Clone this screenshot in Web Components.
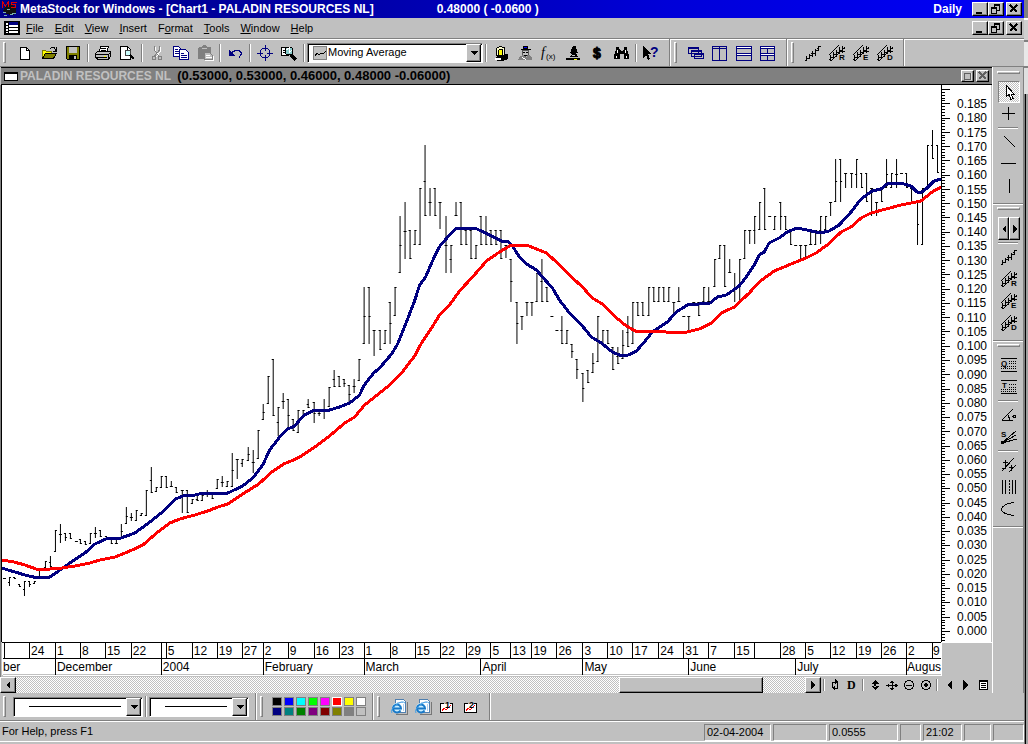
<!DOCTYPE html>
<html lang="en">
<head>
<meta charset="utf-8">
<title>MetaStock for Windows</title>
<style>
  html, body { margin: 0; height: 100%; }
  body { background: #c0c0c0; font: 11px/13px "Liberation Sans", Arial, sans-serif; color: #000; }
</style>
</head>
<body>
<metastock-app></metastock-app>

<script>
const BASE = `*{box-sizing:border-box}button,select{font:inherit;color:inherit;margin:0;padding:0;border:0;background:none;border-radius:0}svg{display:block}`;
const DITHER = 'repeating-conic-gradient(#c0c0c0 0 25%,#fff 0 50%) 0 0/2px 2px';
const RAISED = 'border:1px solid;border-color:#fff #000 #000 #fff;box-shadow:inset -1px -1px #808080';
function define(name, css, html, setup) {
  customElements.define(name, class extends HTMLElement {
    constructor() {
      super();
      this.attachShadow({ mode: 'open' }).innerHTML = `<style>${BASE}${css}</style>${typeof html === 'function' ? '' : html}`;
    }
    connectedCallback() {
      if (this.ready) return;
      this.ready = true;
      if (typeof html === 'function') this.shadowRoot.innerHTML += html(this);
      if (setup) setup(this);
    }
  });
}

/* ---------- icons, all on a 16 x 16 grid ---------- */
const K = 'fill="none" stroke="#000"';
const N = 'fill="none" stroke="#000080"';
const trend = `<path ${K} d="M0 15.500h2M1.500 15v-4M2 13.500h2M4.500 14V9M5 10.500h2M7.500 12V6M6 8.500h1M8 8.500h2M10.500 11V4M11 5.500h2M13.500 6V1M12 3.500h1M14 1.500h2"/>`;
const channel = l => `<path ${K} d="M0 14.500h1M1.500 16v-6M2 12.500h2M4.500 14V7M5 9.500h2M7.500 12V5M8 7.500h2M10.500 10V2M11 5.500h2M13.500 8V1M14 3.500h2M12 6.500h4"/><path ${K} d="M0 10L10 0M2 16L16 2"/><path fill="#c0c0c0" d="M10 9h6v7h-6z"/><text x="10" y="15" font-size="8" font-weight="bold">${l}</text>`;
const ie = `<path fill="#fff" stroke="#5080b0" d="M4.500.5h8l2 2v11h-10z"/><path fill="none" stroke="#b0d0f0" d="M6 3h6M12 5v7"/><path d="M5 15.500h11V3" fill="none" stroke="#777"/><g shape-rendering="auto"><circle cx="6" cy="9" r="5" fill="#cdf0ff"/><path d="M2 9.500h8A4 4 0 1 0 9.500 11.500" fill="none" stroke="#1878c8" stroke-width="2"/><path d="M1 14Q-1 11 5 6t9-2" fill="none" stroke="#40a0e8"/></g>`;
const layoutIcon = n => `<path fill="#fff" stroke="#000" d="M5 4.500H1.500v9h12v-9H11"/><path d="M3 12l2-3 2 2 3-3 2-2" fill="none" stroke="red"/><text x="6" y="9" font-size="9" font-weight="bold">${n}</text>`;
const ICONS = {
  logo: `<path d="M1 10l3-5 5-2 5 4v6l-4 1-6-1z" fill="#111"/><path d="M1 11h3M5 8h3M10 12h4M12 6h2M2 14h3M8 13h3" stroke="#7ab0b0" fill="none"/><path d="M0.500 7V1l3 4 3-4v5M14.500 1.500h-5v2h4v3h-5" fill="none" stroke="#e00000"/>`,
  doc: `<path fill="#fff" stroke="#000" stroke-width="2" d="M1 2h14v12H1z"/><path fill="#000080" d="M5 2h9v3H5z"/><path fill="none" stroke="#000" d="M4.500 2v12M5 7.500h9M5 10.500h9M1 5.500h3M1 8.500h3M1 11.500h3"/>`,
  'new': `<path fill="#fff" stroke="#000" d="M3.500 2.500h6l3 3v9h-9z"/><path ${K} d="M9.500 2v3.500H13"/>`,
  open: `<path fill="#ff0" stroke="#808000" d="M1.500 13V5.500h3l1 1h5V9"/><path fill="#808000" stroke="#000" d="M1.500 13.500l3-5h11l-3 5z"/><path ${K} d="M9 3.500l2-1h2l2 3M15.500 2v4H12"/>`,
  save: `<path fill="#808000" stroke="#000" d="M1.500 1.500h13v13h-12l-1-1z"/><path fill="#c0c0c0" d="M4 2h8v6H4z"/><path fill="#000" d="M4 10h8v5H4z"/><path fill="#c0c0c0" d="M9 11h2v3H9z"/>`,
  print: `<path fill="#fff" stroke="#000" d="M4.500 6l1-4.500h8L12 6z"/><path ${K} d="M6 3.500h5M6 5.500h5"/><path fill="#c0c0c0" stroke="#000" d="M.5 8.500l2-2h13v5l-2 3H3l-2.500-2z"/><path ${K} d="M1 9.500h12M1 12.500h11M13.500 9v5M15 8l-2 2"/><path stroke="#ff0" d="M9 11h2"/>`,
  preview: `<path fill="#fff" stroke="#000" d="M1.500 1.500h7l3 3v10h-10z"/><path ${K} d="M8.500 2v3h3"/><circle cx="9" cy="8" r="3" fill="#cff" stroke="#444"/><path d="M11 10l4 4" stroke="#000" stroke-width="2"/>`,
  cut: `<path fill="none" stroke="#fff" d="M6.500 2v4l4 6M11.500 2v4l-4 6"/><path fill="none" stroke="#808080" d="M5.500 1v4l4 6M10.500 1v4l-5 6"/><path fill="none" stroke="#808080" d="M3.500 11.500h3v3h-3zM9.500 11.500h3v3h-3z"/>`,
  copy: `<path fill="#fff" stroke="#000080" d="M.5 1.500h5l3 3v7h-8z"/><path ${N} d="M2 4.500h3M2 6.500h4M2 8.500h4"/><path fill="#fff" stroke="#000080" d="M6.500 4.500h6l3 3v7h-9z"/><path ${N} d="M8 8.500h3M8 10.500h6M8 12.500h6"/>`,
  paste: `<path fill="#808080" d="M1 3l1-1h3l1-2h3l1 2h3l1 1v11H1z"/><path d="M5 3h5" stroke="#c0c0c0"/><path fill="#c0c0c0" stroke="#808080" d="M7.500 7.500h5l3 3v4h-8z"/><path fill="none" stroke="#fff" d="M9 10.500h4M9 12.500h6M8 15.500h8V11"/>`,
  undo: `<path ${N} d="M2.500 5v5h5M3 9.500l3-3 3-1h3l2 2v2l-2 3"/><path fill="#000080" d="M2 5l6 6H2z"/>`,
  target: `<circle cx="8" cy="8" r="5" ${N}/><path ${N} d="M8 0v6M8 10v6M0 8h6M10 8h6"/>`,
  find: `<path fill="#fff" stroke="#000" d="M.5 2.500h7v8h-7z"/><path fill="none" stroke="#000" d="M2 5h3M2 7h3"/><circle cx="8" cy="6" r="4" fill="#8cc" stroke="#000"/><path d="M5 5l3-2v5l3-3" stroke="#fff" fill="none"/><path d="M10 10l5 5" stroke="#000" stroke-width="3"/>`,
  chart: `<path fill="#c0c0c0" stroke="#808080" d="M1.500 1.500h13v13h-13z"/><path ${K} d="M3 11l2-3 2 2 2-2 2 1 3-3"/>`,
  expert: `<path d="M2 13l3-3 10-1v5l-5 2H4z" fill="#000"/><path fill="#ffc" stroke="#000" d="M3.500 3.500l3-2 5 1v8h-8z"/><path fill="#ff0" stroke="#000" d="M5 11l1-6 3-1 1 6z"/><path d="M2 14h6" stroke="#fff" stroke-width="2"/>`,
  man: `<path fill="#000" d="M4 4h10v1H4zM6 1h5v3H6z"/><path d="M7 2h3" stroke="#00f"/><path fill="#c0c0c0" stroke="#555" d="M5.500 5.500h6v4l-3 2-3-2z"/><path stroke="#000" d="M6 7h2M9 7h2M7 10h3"/><path fill="#808080" d="M1 15l2-4 3-1 3 2 3-2 3 3v2z"/><path stroke="#fff" d="M5 12l4 3" stroke-dasharray="1"/>`,
  fx: `<text x="0" y="12" font-size="14" font-style="italic" font-family="Liberation Serif, serif">f</text><text x="5" y="14" font-size="8">(x)</text>`,
  micro: `<path fill="#000" d="M8 1h3v2l2 5h-2l2 4h-8l2-3-2-1zM1 13h14v2H1z"/><path stroke="#ff0" d="M9 14h3"/><path stroke="#c0c0c0" d="M7 10h3"/>`,
  dollar: `<text x="4" y="13" font-size="14" font-weight="bold" stroke="#000">$</text>`,
  bino: `<path fill="#000" d="M3 2h3v2l2 2h1l2-2V2h3v3l2 5v4h-5V9H7v5H1v-4l2-5z"/><path d="M4 5v3M12 5v3M3 11v2M13 11v2" stroke="#fff"/>`,
  help: `<path fill="#000" d="M0 1v12l3-3 2 5 2-1-2-5h4z"/><text x="7" y="12" font-size="14" font-weight="bold" fill="#000080">?</text>`,
  cascade: `<path fill="#c0c0c0" stroke="#000080" d="M.5 2.500h10v6H.5zM3.500 5.500h10v6h-10zM6.500 8.500h9v5h-9z"/><path ${N} d="M0 3.500h11M3 6.500h11M6 9.500h10"/>`,
  tileV: `<path ${N} d="M.5 1.500h14v14H.5zM7.500 2v13M1 3.500h13"/>`,
  tileH: `<path ${N} d="M.5 1.500h15v14H.5zM1 3.500h14M1 8.500h14M1 10.500h14"/><path stroke="#fff" d="M1 2.500h14M1 9.500h14"/>`,
  tileG: `<path ${N} d="M.5 1.500h14v14H.5zM7.500 2v13M1 3.500h13M1 8.500h13M1 10.500h13"/><path stroke="#fff" d="M1 2.500h13M1 9.500h13"/>`,
  trend, chR: channel('R'), chE: channel('E'), chD: channel('D'),
  cursor: `<path fill="#fff" stroke="#000" d="M5.500 1.500v11l2.500-2 2 5 2-1-2-4.500h3z"/>`,
  cross: `<path ${K} d="M7.500 1v13M1 7.500h13"/>`,
  diag: `<path ${K} d="M3 2l11 11"/>`, hor: `<path ${K} d="M0 7.500h15"/>`, ver: `<path ${K} d="M8.500 1v14"/>`,
  quad: `<path ${K} d="M0 1.500h16M0 14.500h16"/><path ${K} stroke-dasharray="1" d="M8 4.500h8M8 6.500h8M0 9.500h16M0 11.500h16"/><text x="0" y="9" font-size="8" font-weight="bold">Q</text>`,
  tir: `<path ${K} d="M0 1.500h16M0 14.500h16"/><path ${K} stroke-dasharray="1" d="M8 5.500h8M8 8.500h8M0 10.500h16M0 12.500h16"/><text x="1" y="9" font-size="8" font-weight="bold">T</text>`,
  angle: `<path ${K} d="M1 13.500h11M1 13L12 2M7 8l2 5"/><circle cx="13.500" cy="9.500" r="1.500" ${K}/>`,
  fan: `<path ${K} d="M1 14L15 2M1 14L15 6M1 14L16 10"/><path fill="#000" d="M0 12h5l-3 3H0z"/><text x="0" y="8" font-size="8" font-weight="bold">S</text>`,
  fork: `<path ${K} d="M1 14L13 1M8 15l7-7M2 5.500h5M4.500 3v6M8 10.500h5M10.500 8v6M1 11.500h4"/>`,
  lines: `<path ${K} d="M1.500 1v14M4.500 1v14M11.500 1v14M14.500 1v14"/><path ${K} stroke-dasharray="2 1" d="M8.500 1v14"/>`,
  arc: `<path ${K} d="M13 1.500C6 2 1 5 .5 8s5 6 12.500 6.500"/>`,
  left: `<path d="M10 4v8L6 8z"/>`, right: `<path d="M6 4v8l4-4z"/>`,
  leftBig: `<path d="M11 3v10L6 8z"/>`, rightBig: `<path d="M5 3v10l5-5z"/>`,
  down: `<path d="M4 6h8l-4 4z"/>`,
  min: `<path d="M4 11h6v2H4z"/>`,
  restore: `<path d="M6 3h6v2H6zM3 6h6v2H3z"/><path ${K} d="M6.500 5v1M11.500 4v5H9M3.500 7v5.500h5V7"/>`,
  max: `<path fill="#fff" d="M5 5h7v8H5z"/><path fill="#c0c0c0" stroke="#000" d="M4.500 5.500h6v6h-6z"/>`,
  close: `<path d="M4 4l7 7M11 4l-7 7" stroke="#000" stroke-width="2"/>`,
  refresh: `<path ${K} d="M5.500 11V5h3M10.500 5v6h-3"/><path d="M8 2l3 3-3 2zM8 14l-3-3 3-2z"/>`,
  day: `<text x="3" y="12" font-size="12" font-weight="bold" font-family="Liberation Serif, serif">D</text>`,
  ud: `<path d="M8 3l4 4H4zM8 13l4-4H4zM7 6h2v4H7z"/>`,
  move: `<path ${K} d="M8 4v9M3 8.500h10"/><path d="M8 3l2 3H6zM8 14l2-3H6zM2 8.500l3-2v4zM14 8.500l-3-2v4z"/>`,
  minus: `<circle cx="8" cy="8" r="4.500" ${K}/><path ${K} d="M5 8.500h6"/>`,
  plus: `<circle cx="8" cy="8" r="4.500" ${K}/><path stroke="#000" stroke-width="2" d="M6 8h4M8 6v4"/>`,
  sheet: `<path fill="#fff" stroke="#000" d="M4.500 3.500h8v9h-8z"/><path ${K} d="M4 4.500h8M6 6.500h5M6 8.500h5M6 10.500h5"/>`,
  ie, lay1: layoutIcon(1), lay2: layoutIcon(2)
};

define('ms-icon', `:host{display:block;width:16px;height:16px;flex:none}svg{overflow:visible;font-family:"Liberation Sans",sans-serif}`,
  el => `<svg width="16" height="16" viewBox="0 0 16 16" shape-rendering="crispEdges" aria-hidden="true">${ICONS[el.getAttribute('name')] || ''}</svg>`);

define('tool-button', `:host{display:block;width:24px;height:22px;flex:none}
  :host([mini]){width:17px;height:16px}
  button{width:100%;height:100%;display:flex;align-items:center;justify-content:center}
  :host([down]) button{border:1px solid;border-color:#808080 #fff #fff #808080;background:${DITHER}}`,
  el => `<button type="button" aria-label="${el.getAttribute('label')}"><ms-icon name="${el.getAttribute('icon')}"></ms-icon></button>`);

define('cap-button', `:host{display:block;width:16px;height:14px;flex:none}
  :host([small]){width:13px;height:12px}
  button{width:100%;height:100%;background:#c0c0c0;${RAISED};display:flex;align-items:center;justify-content:center;overflow:hidden}
  :host([small]) ms-icon{opacity:.5}`,
  el => `<button type="button" aria-label="${el.getAttribute('label')}"><ms-icon name="${el.getAttribute('icon')}"></ms-icon></button>`);

define('bar-grip', `:host{display:block;width:3px;height:21px;flex:none;margin:0 7px 0 3px;border:1px solid;border-color:#fff #808080 #808080 #fff}
  :host([flat]){width:23px;height:3px;margin:2px 0 7px 4px}`, '');
define('bar-sep', `:host{display:block;width:2px;height:18px;margin:0 2px;flex:none;border-left:1px solid #808080;border-right:1px solid #fff}
  :host([flat]){width:20px;height:2px;margin:2px 5px;border:0;border-top:1px solid #808080;border-bottom:1px solid #fff}
  :host([end]){height:auto;align-self:stretch;margin:0}
  :host([end][flat]){width:auto;height:2px;margin:6px 0 0}
  :host([mini]){height:12px;margin:0 2px}`, '');

/* ---------- title and menu ---------- */
define('title-bar', `:host{display:flex;align-items:center;height:18px;padding:0 2px;color:#fff;font-weight:bold;font-size:12px;line-height:16px;background:linear-gradient(90deg,#000088,#0000a8 35%,#0000d8 65%,#0000f8);white-space:nowrap}
  .t{margin-left:2px}.p{margin-left:63px}.d{margin-left:auto;margin-right:10px}cap-button:last-child{margin-left:2px}`,
  `<ms-icon name="logo"></ms-icon><span class="t"><slot></slot></span><span class="p"><slot name="price"></slot></span><span class="d"><slot name="period"></slot></span>
  <cap-button icon="min" label="Minimize"></cap-button><cap-button icon="restore" label="Restore"></cap-button><cap-button icon="close" label="Close"></cap-button>`);

define('menu-bar', `:host{display:flex;align-items:center;height:20px;padding:0 2px 0 4px}
  nav{display:flex;flex:1;gap:1px;padding-left:1px}nav button{padding:0 5px}cap-button:last-child{margin-left:2px}`,
  `<ms-icon name="doc"></ms-icon><nav>${['File','Edit','View','Insert','F|ormat','Tools','Window','Help'].map(m => {
    const s = m === 'F|ormat' ? 'F<u>o</u>rmat' : `<u>${m[0]}</u>${m.slice(1)}`; return `<button type="button">${s}</button>`; }).join('')}</nav>
  <cap-button icon="min" label="Minimize chart"></cap-button><cap-button icon="restore" label="Restore chart"></cap-button><cap-button icon="close" label="Close chart"></cap-button>`);

/* ---------- drop-down ---------- */
define('drop-list', `:host{display:block;flex:none;height:20px}
  div{display:flex;align-items:center;height:100%;background:#fff;border:1px solid;border-color:#808080 #fff #fff #808080;box-shadow:inset 1px 1px #000;padding:1px 1px 1px 4px;position:relative}
  select{appearance:none;flex:1;min-width:0;height:100%;outline:0}
  .line{background:linear-gradient(#000,#000) no-repeat 11px 50%/calc(100% - 31px) 1px}
  span{width:15px;height:100%;background:#c0c0c0;${RAISED};display:flex;align-items:center;justify-content:center;overflow:hidden;position:absolute;right:1px;top:0;pointer-events:none}`,
  el => { const t = el.getAttribute('text'); return `<div>${t ? '<ms-icon name="chart"></ms-icon>' : ''}<select aria-label="${el.getAttribute('label')}"${t ? '' : ' class="line"'}><option${t ? '' : ' label=" "'}>${t || ''}</option></select><span><ms-icon name="down"></ms-icon></span></div>`; });

/* ---------- toolbars ---------- */
const tb = list => list.split(' ').map(n => n === '|' ? '<bar-sep></bar-sep>' : `<tool-button icon="${n}" label="${n}"></tool-button>`).join('');
define('main-toolbar', `:host{display:flex;align-items:center;height:29px;border-top:1px solid #808080;border-bottom:1px solid #808080;box-shadow:inset 0 1px #fff}
  drop-list{width:176px}bar-sep[end]{margin-left:6px}`,
  `<bar-grip></bar-grip>${tb('new open save | print preview | cut copy paste | undo | target find |')}
   <drop-list text="Moving Average" label="Indicator"></drop-list>${tb('| expert man fx micro dollar bino | help')}
   <bar-sep end></bar-sep><bar-grip></bar-grip>${tb('cascade tileV tileH tileG')}<bar-sep end></bar-sep><bar-grip></bar-grip>${tb('trend chR chE chD')}<bar-sep end></bar-sep>`);

const vb = list => list.split(' ').map(n => n === '|' ? '<bar-sep flat></bar-sep>' : `<tool-button icon="${n}" label="${n}"${n === 'cursor' ? ' down' : ''}></tool-button>`).join('');
define('side-toolbar', `:host{display:block;width:32px;border-left:1px solid #fff;border-right:1px solid #808080;padding-top:2px}
  tool-button{width:22px;margin-left:5px}
  .spin{display:flex;width:22px;height:23px;margin-left:5px}
  .spin cap-button{width:11px;height:23px}`,
  `<bar-grip flat></bar-grip>${vb('cursor cross | diag hor ver')}<bar-sep flat end></bar-sep>
   <bar-grip flat></bar-grip><div class="spin"><cap-button icon="left" label="Back"></cap-button><cap-button icon="right" label="Forward"></cap-button></div><bar-sep flat></bar-sep>${vb('trend chR chE chD')}<bar-sep flat end></bar-sep>
   <bar-grip flat></bar-grip>${vb('quad tir | angle fan | fork lines arc')}<bar-sep flat end></bar-sep>`);

define('color-palette', `:host{display:grid;grid-template-columns:repeat(8,10px);grid-auto-rows:9px;gap:1px 2px;margin:0 0 0 2px}
  label{display:block;border:1px solid #808080;background-clip:padding-box}input{appearance:none;display:block;width:100%;height:100%;margin:0}
  label:has(:checked){border-color:#fff}`,
  ['#000','#00f','#0ff','#0f0','#f0f','#f00','#ff0','#fff','#000080','#008080','#008000','#800080','#800000','#808000','#808080','#c0c0c0']
    .map(c => `<label style="background-color:${c}"><input type="radio" name="ink" aria-label="${c}"${c === '#f00' ? ' checked' : ''}></label>`).join(''));

define('line-toolbar', `:host{display:flex;align-items:center;height:28px;border-bottom:1px solid #808080}
  .a{width:130px}.b{width:100px}bar-sep{height:21px}bar-sep[end]{height:auto;margin-left:6px}`,
  `<bar-grip></bar-grip><drop-list class="a" label="Line style"></drop-list><bar-sep></bar-sep><drop-list class="b" label="Line weight"></drop-list>
   <bar-sep end></bar-sep><bar-grip></bar-grip><color-palette></color-palette><bar-sep end></bar-sep><bar-grip></bar-grip>${tb('ie ie lay1 lay2')}<bar-sep end></bar-sep>`);

define('status-bar', `:host{display:flex;align-items:flex-start;gap:2px;height:23px;padding:2px 0 0 2px;border-top:1px solid #fff;box-shadow:inset 0 -2px #c0c0c0,inset 0 -3px #fff;line-height:14px}
  .m{flex:1}p{margin:0;height:17px;padding:0 2px;border:1px solid;border-color:#808080 #fff #fff #808080;white-space:nowrap}`,
  `<span class="m">For Help, press F1</span>${[[67,'02-04-2004'],[54,''],[69,'0.0555'],[21,''],[39,'21:02'],[27,''],[31,'']].map(([w,t]) => `<p style="width:${w}px">${t}</p>`).join('')}`);

/* ---------- chart ---------- */
/* each bar: x, high, low, then where the open and close ticks sit (t top, m middle, b bottom) */
const BARS = `4 578 578 tt,9 577 586 mt,14 577 579 tb,19 584 587 tb,24 581 596 mt,29 581 587 tm,34 581 584 bt,39 568 578 bt,45 561 568 bt,50 556 567 mb,55 530 552 bt,60 524 543 mm,65 533 541 tm,70 533 539 tb,76 541 541 tt,80 539 544 tb,85 541 545 tb,90 533 544 bt,95 527 538 mm,100 530 537 tb,106 536 539 tb,111 539 544 tb,116 539 544 bb,121 524 538 bm,126 507 524 bm,131 513 521 mm,136 510 521 bt,141 513 516 bt,146 490 516 bt,151 467 493 mb,156 487 492 bt,161 476 488 bt,166 476 488 tb,171 481 487 bb,176 487 493 tb,182 490 513 tt,187 490 513 tb,192 499 504 bt,197 496 501 mb,202 495 501 bt,207 490 497 mm,212 494 499 tb,217 479 489 bt,222 476 487 mm,227 481 487 bt,232 453 487 bm,237 459 479 tt,242 459 467 mt,248 447 461 bm,253 450 473 mm,258 430 459 bt,263 404 420 bm,268 376 404 bt,273 359 416 tb,278 407 436 mt,283 393 409 mm,288 399 430 tm,293 419 431 tb,298 410 433 bt,303 410 418 bt,308 399 408 mb,314 402 423 tm,319 409 416 mm,324 399 419 mm,329 387 407 bt,334 370 387 mb,339 376 387 tb,344 379 387 tm,349 385 402 tm,354 379 393 mm,359 359 381 bt,364 287 344 bm,369 287 344 tm,374 330 356 tt,380 330 350 tb,385 330 344 bt,390 302 344 tm,395 287 316 bt,400 216 273 bm,405 202 259 mm,410 230 259 tb,415 230 245 bt,420 188 245 bt,425 145 216 mb,430 188 216 mm,435 188 216 tb,440 202 229 tt,446 216 273 mm,451 245 273 mt,456 202 216 bb,461 202 245 tb,466 230 245 tb,471 230 259 tb,476 245 259 bt,481 216 245 tb,486 216 245 mb,491 230 245 tb,496 230 245 tb,501 230 259 tb,506 245 258 tt,511 259 302 tm,517 302 344 tm,522 316 330 tt,527 302 316 tt,532 302 316 tt,537 273 302 bt,542 259 302 mb,547 287 302 tb,552 316 316 tt,557 330 330 tt,562 316 344 mb,567 330 344 bt,572 344 358 tm,577 359 379 tm,583 373 402 tm,588 370 383 tb,593 353 373 bm,598 316 362 bt,603 330 344 bt,608 330 344 tb,613 347 370 tb,618 347 364 mb,623 330 359 bm,628 316 347 mb,633 302 344 bt,638 302 316 tb,643 302 316 tb,649 287 316 bt,654 287 302 tb,659 287 302 bt,664 287 302 tb,669 287 302 bt,674 302 313 tt,679 287 302 bb,684 316 316 tt,689 316 331 tt,694 302 302 tt,699 302 316 tb,704 287 302 bt,709 287 302 bb,715 259 287 bt,720 245 259 bt,725 245 287 tb,730 259 273 bb,735 273 302 mm,740 259 302 bt,745 230 259 bt,750 230 244 tt,755 216 244 mt,760 202 230 bt,765 188 230 tb,770 216 216 tt,775 216 230 bt,781 202 230 tm,786 216 230 tb,791 230 245 tb,796 245 245 tt,801 245 259 tt,806 245 258 tt,811 230 245 bb,816 230 245 bt,821 216 244 mt,826 216 230 bt,831 202 216 tt,836 159 202 bm,841 159 202 tm,846 173 188 tt,852 173 188 tt,857 159 188 mt,862 173 188 tb,867 173 202 tb,872 188 216 tt,877 202 216 tt,882 188 202 tb,887 159 188 bm,892 173 188 bt,897 159 188 mm,902 173 173 tt,907 173 188 tb,912 188 202 tb,918 202 245 tm,923 188 245 bt,928 145 188 bt,933 130 159 mb,938 145 173 tb`;
const FAST = '2,568 8,570 15,572 25,575 38,578 50,577 60,570 70,563 85,553 95,544 106,539 121,538 135,533 150,522 165,510 176,499 183,496 195,495 204,493 215,494 228,493 243,486 254,477 263,465 270,450 280,437 288,429 295,426 300,420 305,415 313,411 320,410 330,410 340,407 350,403 360,395 364,386 374,373 380,368 392,354 398,344 408,319 415,301 420,285 426,277 436,254 441,245 452,233 457,228 475,228 482,231 494,237 502,241 508,241 513,246 520,257 527,264 537,270 543,277 553,288 560,300 570,313 583,326 592,337 602,343 613,352 620,355 629,355 637,351 645,342 653,332 668,322 677,312 688,305 700,304 711,303 718,297 727,295 740,286 747,277 755,265 760,255 765,252 770,243 780,238 788,232 798,228 808,230 821,233 830,231 840,225 852,212 862,199 873,191 882,189 888,184 897,183 905,184 912,186 918,192 923,192 928,188 935,181 942,179';
const SLOW = '2,560 14,562 25,565 36,569 50,569 62,568 75,566 90,563 100,560 115,557 130,551 143,545 158,532 170,523 180,519 195,515 208,511 218,507 228,504 243,494 259,484 272,472 284,464 294,460 300,457 318,445 330,436 338,429 345,423 355,417 365,405 380,393 390,385 402,373 415,356 422,343 432,328 440,315 450,305 460,291 473,277 487,261 500,252 512,245 527,245 547,253 557,262 570,275 583,287 593,298 603,304 615,316 627,326 638,332 657,331 667,332 688,332 700,329 712,323 722,313 735,307 750,293 760,282 775,271 792,264 807,258 817,253 828,245 842,232 852,227 862,218 872,213 887,209 902,205 922,201 933,192 942,187';

define('price-plot', `:host{display:block;min-width:0;min-height:0;background:#fff;position:relative;overflow:hidden}svg{position:absolute;inset:0;width:100%;height:100%}`,
  () => {
    const d = BARS.split(',').map(r => {
      const [x, h, l, oc] = r.trim().split(' ');
      const X = +x, H = +h, L = Math.max(+l, H + 1);
      const y = c => (c === 't' ? H : c === 'b' ? L - 1 : Math.round((H + L) / 2)) + .5;
      return `${H === +l ? '' : `M${X + .5} ${H}V${L}`}M${X - 1} ${y(oc[0])}h2M${X} ${y(oc[1])}h2`;
    }).join('');
    return `<svg viewBox="2 85 940 557" preserveAspectRatio="none" shape-rendering="crispEdges" role="img" aria-label="Daily prices with two moving averages"><path d="${d}" fill="none" stroke="#000"/><g fill="none" stroke-width="3" stroke-linejoin="round"><polyline points="${FAST}" stroke="#000080"/><polyline points="${SLOW}" stroke="#f00"/></g></svg>`;
  });

define('price-scale', `:host{display:flex;flex-direction:column;background:#fff;padding:12px 3px 4px 16px;font-size:12px;line-height:14px;position:relative;border-right:1px solid #c0c0c0;min-height:0;text-align:left}
  span{flex:1 1 0;min-height:0;display:flex;align-items:center}svg{position:absolute;left:0;top:0;width:12px;height:100%}`,
  () => {
    let d = 'M.5 0V557';
    const step = 542 / 38 / 5;
    for (let i = -3; i < 191; i++) { const y = Math.round(546 - i * step); if (y > 0 && y < 557) d += `M0 ${y + .5}H${i % 5 === 0 ? 9 : 4}`; }
    let s = '';
    for (let i = 37; i >= 0; i--) s += `<span>${(i * .005).toFixed(3)}</span>`;
    return `<svg viewBox="0 0 12 557" preserveAspectRatio="none" shape-rendering="crispEdges" aria-hidden="true"><path d="${d}" fill="none" stroke="#000"/></svg>${s}`;
  });

define('date-scale', `:host{display:block;background:#fff;font-size:12px;line-height:16px;border-bottom:1px solid #c0c0c0;min-width:0}
  div{display:grid;border-top:1px solid #000;height:16px}
  span{min-width:0;border-left:1px solid #000;padding-left:1px;white-space:nowrap}
  span:first-child{border-left-color:#fff}
  .d span:first-child,.d span:last-child{padding:0}`,
  () => {
    const row = (a, end, c) => { const w = a.map(([x], i) => (a[i + 1] ? a[i + 1][0] : end) - x); return `<div class="${c}" style="grid-template-columns:${w.map(v => `minmax(0,${v}fr)`).join(' ')}">${a.map(([, t]) => `<span>${t}</span>`).join('')}</div>`; };
    return row([[2,''],[4,''],[29,24],[55,1],[80,8],[105,15],[131,22],[161,''],[166,5],[192,12],[217,19],[242,27],[263,2],[288,9],[314,16],[339,23],[364,1],[390,8],[415,15],[440,22],[466,29],[491,5],[511,13],[532,19],[557,26],[583,3],[608,10],[633,17],[659,24],[684,31],[709,7],[735,15],[755,''],[781,28],[806,5],[831,12],[857,19],[882,26],[907,2],[933,9]], 942, 'd')
      + row([[2,'ber'],[55,'December'],[161,'2004'],[263,'February'],[364,'March'],[481,'April'],[583,'May'],[689,'June'],[796,'July'],[907,'Augus']], 942, 'd');
  });

define('time-scroller', `:host{display:flex;align-items:center;height:16px}
  .sb{flex:1;display:grid;grid-template-columns:16px 603fr 144fr 42fr 16px;height:16px;background:${DITHER}}
  cap-button{width:16px;height:16px}.th{background:#c0c0c0;${RAISED};grid-column:3}.r{grid-column:5}
  .tools{display:flex;align-items:center;width:171px}.tools bar-sep:first-child{margin-right:1px}`,
  `<div class="sb"><cap-button icon="left" label="Scroll left"></cap-button><button class="th" type="button" aria-label="Scroll position"></button><cap-button class="r" icon="right" label="Scroll right"></cap-button></div>
   <div class="tools"><bar-sep mini></bar-sep>${['refresh','day','|','ud','move','minus','plus','|','leftBig','rightBig','sheet'].map(n => n === '|' ? '<bar-sep mini></bar-sep>' : `<tool-button mini icon="${n}" label="${n}"></tool-button>`).join('')}</div>`);

define('chart-window', `:host{display:grid;grid-template-rows:18px 1fr 35px 16px;min-width:0}
  header{display:flex;align-items:center;background:#808080;border:solid #000;border-width:1px 0 1px 0;margin-left:1px;padding:0 3px;font-weight:bold;font-size:12px;line-height:14px;gap:2px;white-space:nowrap}
  .w{width:14px;height:9px;background:#fff;border:1px solid #000;border-top-width:2px}
  .n{color:#c0c0c0}.v{font-size:13px;margin:0 auto 0 4px}
  .plot{display:grid;grid-template-columns:1fr 51px;border-left:1px solid #808080;box-shadow:inset 1px 0 #000;padding-left:1px;margin:0;min-height:0}
  .dates{display:grid;grid-template-columns:1fr 51px;border-left:1px solid #808080;padding-left:1px;align-items:start}
  .dates i{border-top:1px solid #fff;height:1px}date-scale{box-shadow:1px 1px #fff}`,
  `<header><i class="w"></i><span class="n">PALADIN RESOURCES NL</span><span class="v">(0.53000, 0.53000, 0.46000, 0.48000 -0.06000)</span><cap-button small icon="max" label="Maximize"></cap-button><cap-button small icon="close" label="Close"></cap-button></header>
   <div class="plot"><price-plot></price-plot><price-scale></price-scale></div>
   <div class="dates"><date-scale></date-scale><i></i></div><time-scroller></time-scroller>`);

define('metastock-app', `:host{display:grid;grid-template-columns:minmax(0,1fr) 4px;min-height:100vh;background:#c0c0c0}
  main{display:grid;grid-template-rows:auto auto auto 1fr auto auto;min-width:0}
  .work{display:grid;grid-template-columns:minmax(0,1fr) 32px;min-height:0}
  .edge{background:linear-gradient(#808080 0 18px,#fff 18px 20px,#d0d0d0 20px 40px,#808080 40px 42px,#e8e8e8 42px 66px,#808080 66px 68px,#e0e0e0 68px 94px,transparent 94px),linear-gradient(90deg,#808080 1px,#000 1px 2px,#a0a0a0 2px)}`,
  `<main><title-bar>MetaStock for Windows - [Chart1 - PALADIN RESOURCES NL]<span slot="price">0.48000 ( -0.0600 )</span><span slot="period">Daily</span></title-bar>
   <menu-bar></menu-bar><main-toolbar></main-toolbar>
   <div class="work"><chart-window></chart-window><side-toolbar></side-toolbar></div>
   <line-toolbar></line-toolbar><status-bar></status-bar></main><div class="edge"></div>`);
</script>
</body>
</html>
